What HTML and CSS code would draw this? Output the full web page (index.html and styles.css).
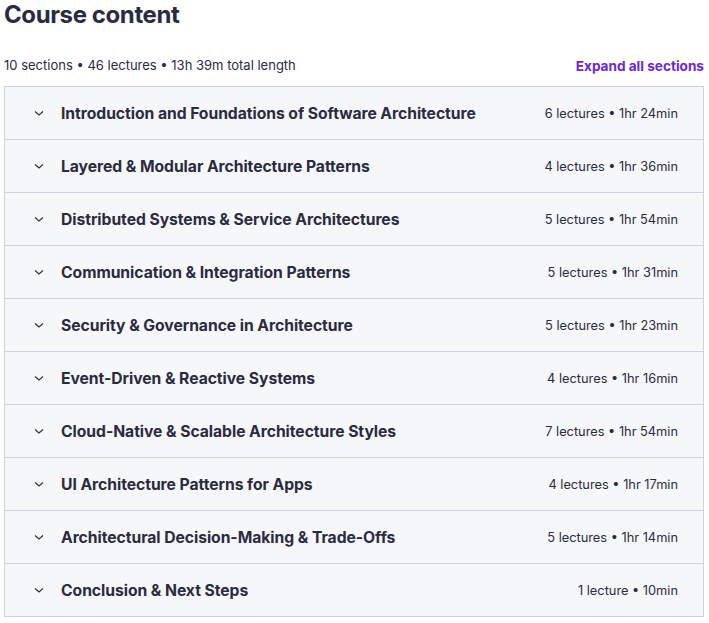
FILE: index.html
```html
<!DOCTYPE html>
<html lang="en">
<head>
    <meta charset="UTF-8">
    <meta name="viewport" content="width=device-width, initial-scale=1.0">
    <title>Course content</title>
    <link rel="stylesheet" href="styles.css">
</head>
<body>
    <div class="course">
        <h2>Course content</h2>
        <div class="summary">
            <span>10 sections • 46 lectures • 13h 39m total length</span>
            <button class="expand-btn">Expand all sections</button>
        </div>
        <div class="sections" id="sections"></div>
    </div>

    <script>
        const sections = [
            { title: "Introduction and Foundations of Software Architecture", info: "6 lectures • 1hr 24min" },
            { title: "Layered & Modular Architecture Patterns", info: "4 lectures • 1hr 36min" },
            { title: "Distributed Systems & Service Architectures", info: "5 lectures • 1hr 54min" },
            { title: "Communication & Integration Patterns", info: "5 lectures • 1hr 31min" },
            { title: "Security & Governance in Architecture", info: "5 lectures • 1hr 23min" },
            { title: "Event-Driven & Reactive Systems", info: "4 lectures • 1hr 16min" },
            { title: "Cloud-Native & Scalable Architecture Styles", info: "7 lectures • 1hr 54min" },
            { title: "UI Architecture Patterns for Apps", info: "4 lectures • 1hr 17min" },
            { title: "Architectural Decision-Making & Trade-Offs", info: "5 lectures • 1hr 14min" },
            { title: "Conclusion & Next Steps", info: "1 lecture • 10min" }
        ];

        const list = document.getElementById("sections");
        sections.forEach(sec => {
            const row = document.createElement("div");
            row.className = "section-row";
            row.innerHTML = `<svg class="chevron" width="12" height="12" viewBox="0 0 12 12"><path d="M2 4.5 L6 8 L10 4.5" fill="none" stroke="#2d2f31" stroke-width="1.1"/></svg>
                             <span class="section-title">${sec.title}</span>
                             <span class="section-info">${sec.info}</span>`;
            list.appendChild(row);
        });
    </script>
</body>
</html>
```

FILE: styles.css
```css
body { font-family: Inter, "Noto Sans", sans-serif; margin: 0; padding: 0 5px 0 4px; background: white; color: #2a2b3f; }
h2 { font-size: 24px; font-weight: 700; margin: 0; padding-top: 1px; line-height: 28px; letter-spacing: -0.4px; }
.summary { display: flex; justify-content: space-between; align-items: center; margin-top: 25px; height: 22px; font-size: 13px; }
.expand-btn { background: none; border: none; padding: 0; font-family: inherit; font-size: 13.6px; font-weight: 700; color: #6d28d2; cursor: pointer; position: relative; top: 1px; }
.sections { margin-top: 10px; border: 1px solid #d1d2e0; border-bottom: none; }
.section-row { display: flex; align-items: center; height: 52px; background: #f6f7f9; border-bottom: 1px solid #d1d2e0; padding: 0 25px 0 28px; }
.chevron { flex: none; margin-right: 16px; }
.section-title { flex: 1; font-size: 15.7px; font-weight: 700; letter-spacing: -0.05px; }
.section-info { font-size: 12.8px; }
```
